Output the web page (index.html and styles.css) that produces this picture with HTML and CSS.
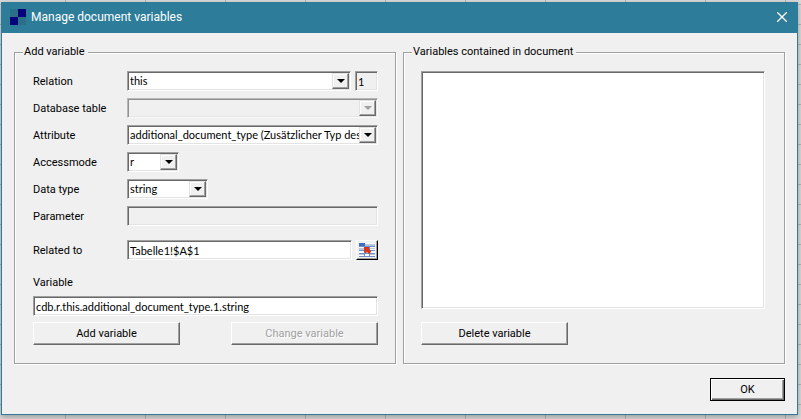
FILE: index.html
```html
<!DOCTYPE html>
<html lang="en">
<head>
<meta charset="utf-8">
<title>Manage document variables</title>
<link rel="stylesheet" href="styles.css">
</head>
<body>
<main class="dialog">
  <header class="titlebar">
    <svg class="logo" width="16" height="16" viewBox="0 0 16 16" aria-hidden="true">
      <path fill="#2a7089" d="M0 0h8v8H0zM8 8h8v8H8z"/>
      <path fill="#03037a" d="M8 0h8v8H8zM0 8h8v8H0z"/>
    </svg>
    <h1>Manage document variables</h1>
    <button class="close" type="button" aria-label="Close">
      <svg width="10" height="10" viewBox="0 0 10 10"><path d="M0 0l10 10M10 0L0 10" stroke="#fff" stroke-width="1.3"/></svg>
    </button>
  </header>
  <form class="content">
    <div class="panels">
      <fieldset>
        <legend>Add variable</legend>
        <div class="rows">
          <div class="row">
            <label for="relation">Relation</label>
            <div class="combo grow"><select id="relation"><option>this</option></select><span class="arrow"></span></div>
            <input class="index" aria-label="Relation index" value="1" readonly>
          </div>
          <div class="row">
            <label for="table">Database table</label>
            <div class="combo grow off"><select id="table" disabled><option></option></select><span class="arrow"></span></div>
          </div>
          <div class="row">
            <label for="attribute">Attribute</label>
            <div class="combo grow"><select id="attribute"><option>additional_document_type (Zusätzlicher Typ des</option></select><span class="arrow"></span></div>
          </div>
          <div class="row">
            <label for="access">Accessmode</label>
            <div class="combo mode"><select id="access"><option>r</option></select><span class="arrow"></span></div>
          </div>
          <div class="row">
            <label for="type">Data type</label>
            <div class="combo type"><select id="type"><option>string</option></select><span class="arrow"></span></div>
          </div>
          <div class="row">
            <label for="parameter">Parameter</label>
            <input class="grow" id="parameter" disabled>
          </div>
          <div class="row related">
            <label for="related">Related to</label>
            <input class="grow" id="related" value="Tabelle1!$A$1">
            <button class="picker" type="button" aria-label="Select cell">
              <svg width="16" height="14" viewBox="0 0 16 14">
                <path fill="#fff" d="M0 0h16v14H0z"/>
                <path fill="#b9c6dc" d="M6 1h10v2H6zM0 5h5v2H0zM0 11h5v1H0zM11 11h5v1h-5zM11 5h5v1h-5z"/>
                <path fill="#6f8fc6" d="M0 3h16v1H0zM0 7h16v1H0zM0 10h16v1H0zM0 13h16v1H0zM5 4h1v10H5zM10 4h1v10h-1z"/>
                <path fill="#3f6cc4" d="M0 0h6v3H0z"/>
                <path fill="#d8351c" d="M5 4h5v2l2 2v1l-2 2-2-2-1 1H6L5 8z"/>
              </svg>
            </button>
          </div>
        </div>
        <label class="above" for="variable">Variable</label>
        <input class="wide" id="variable" value="cdb.r.this.additional_document_type.1.string">
        <div class="actions">
          <button class="push" type="button">Add variable</button>
          <button class="push" type="button" disabled>Change variable</button>
        </div>
      </fieldset>
      <fieldset class="contained">
        <legend>Variables contained in document</legend>
        <select class="list" size="8" aria-label="Variables contained in document"></select>
        <button class="push" type="button">Delete variable</button>
      </fieldset>
    </div>
    <button class="ok" type="button">OK</button>
  </form>
</main>
</body>
</html>
```
FILE: styles.css
```css
* { box-sizing: border-box; }

body {
  margin: 0;
  padding: 2px 3px 4px 1px;
  min-height: 100vh;
  display: flex;
  background-color: #dadada;
  background-image:
    linear-gradient(90deg, #b4b4b4 1px, transparent 1px),
    linear-gradient(#b4b4b4 1px, transparent 1px);
  background-size: 80px 20px;
  background-position: 65px 4px;
  font: 11px/16px Roboto, "Liberation Sans", sans-serif;
  color: #000;
}

.dialog {
  flex: 1;
  min-width: 0;
  display: flex;
  flex-direction: column;
  background: #f0f0f0;
  border: 1px solid #2d7d9a;
  box-shadow: 0 2px 6px rgba(0, 0, 0, .3);
}

.titlebar {
  display: flex;
  align-items: center;
  gap: 5px;
  height: 30px;
  padding: 0 10px 2px 8px;
  background: #2d7d9a;
  color: #fff;
}

h1 {
  flex: 1;
  margin: 0;
  font-size: 12px;
  font-weight: 400;
}

.close {
  display: flex;
  padding: 0;
  border: 0;
  background: none;
}

.content {
  flex: 1;
  display: flex;
  flex-direction: column;
  padding: 11px 12px 13px;
}

.panels {
  display: grid;
  grid-template-columns: 1fr 1fr;
  gap: 7px;
  flex: 1;
}

fieldset {
  display: flex;
  flex-direction: column;
  min-width: 0;
  margin: 0;
  padding: 11px 17px 18px 18px;
  border: 1px solid #a0a0a0;
  box-shadow: 1px 1px 0 #fff, inset 1px 1px 0 #fff;
}

.contained {
  padding: 11px 19px 18px 17px;
}

legend {
  margin-left: -10px;
  padding: 0 3px 0 1px;
  background: #f0f0f0;
}

.contained legend {
  margin-left: -9px;
}

.rows {
  display: flex;
  flex-direction: column;
  gap: 7px;
}

.row {
  display: flex;
  align-items: center;
  gap: 4px;
  height: 20px;
}

.row label {
  width: 90px;
  padding-top: 2px;
}

.related {
  margin-top: 7px;
}

.grow {
  flex: 1;
  min-width: 0;
}

input,
select {
  height: 20px;
  margin: 0;
  padding: 0 2px;
  border: 1px solid;
  border-color: #a0a0a0 #fff #fff #a0a0a0;
  border-radius: 0;
  outline: 0;
  box-shadow: inset 1px 1px 0 #696969, inset -1px -1px 0 #e3e3e3;
  background: #fff;
  color: #000;
  font: 11px/16px Lato, "Liberation Sans", sans-serif;
  appearance: none;
}

input:disabled,
select:disabled,
.index {
  background: #f0f0f0;
}

.index {
  width: 23px;
}

.combo {
  position: relative;
  display: flex;
}

.combo select {
  flex: 1;
  min-width: 0;
  padding-right: 17px;
}

.mode { width: 52px; }
.type { width: 81px; }

.arrow {
  position: absolute;
  inset: 2px 2px 2px auto;
  width: 17px;
  display: grid;
  place-items: center;
  border: 1px solid;
  border-color: #e3e3e3 #696969 #696969 #e3e3e3;
  box-shadow: inset -1px -1px 0 #a0a0a0, inset 1px 1px 0 #fff;
  background: #f0f0f0;
  pointer-events: none;
}

.arrow::before {
  content: "";
  border: 4px solid transparent;
  border-top-color: #000;
  border-bottom: 0;
}

.off .arrow::before {
  border-top-color: #a0a0a0;
}

.push,
.picker,
.ok {
  border: 1px solid;
  border-color: #fff #696969 #696969 #fff;
  border-radius: 0;
  box-shadow: inset -1px -1px 0 #a0a0a0;
  background: #f0f0f0;
  color: #000;
  font: inherit;
}

.push {
  width: 147px;
  height: 23px;
  padding: 0;
}

.push:disabled {
  color: #a0a0a0;
  text-shadow: 1px 1px 0 #fff;
}

.picker {
  display: grid;
  place-items: center;
  width: 22px;
  height: 20px;
  padding: 0;
  border-color: #fff #000 #000 #fff;
}

.above {
  margin: 15px 0 5px;
}

.wide {
  width: 100%;
}

.actions {
  display: flex;
  justify-content: space-between;
  margin-top: 6px;
}

.list {
  flex: 1;
  width: 100%;
  margin-bottom: 13px;
}

.ok {
  align-self: flex-end;
  width: 75px;
  height: 23px;
  margin-top: 14px;
  padding: 0;
  border-color: #000;
  box-shadow: inset 1px 1px 0 #fff, inset -1px -1px 0 #696969, inset -2px -2px 0 #a0a0a0;
}
```
